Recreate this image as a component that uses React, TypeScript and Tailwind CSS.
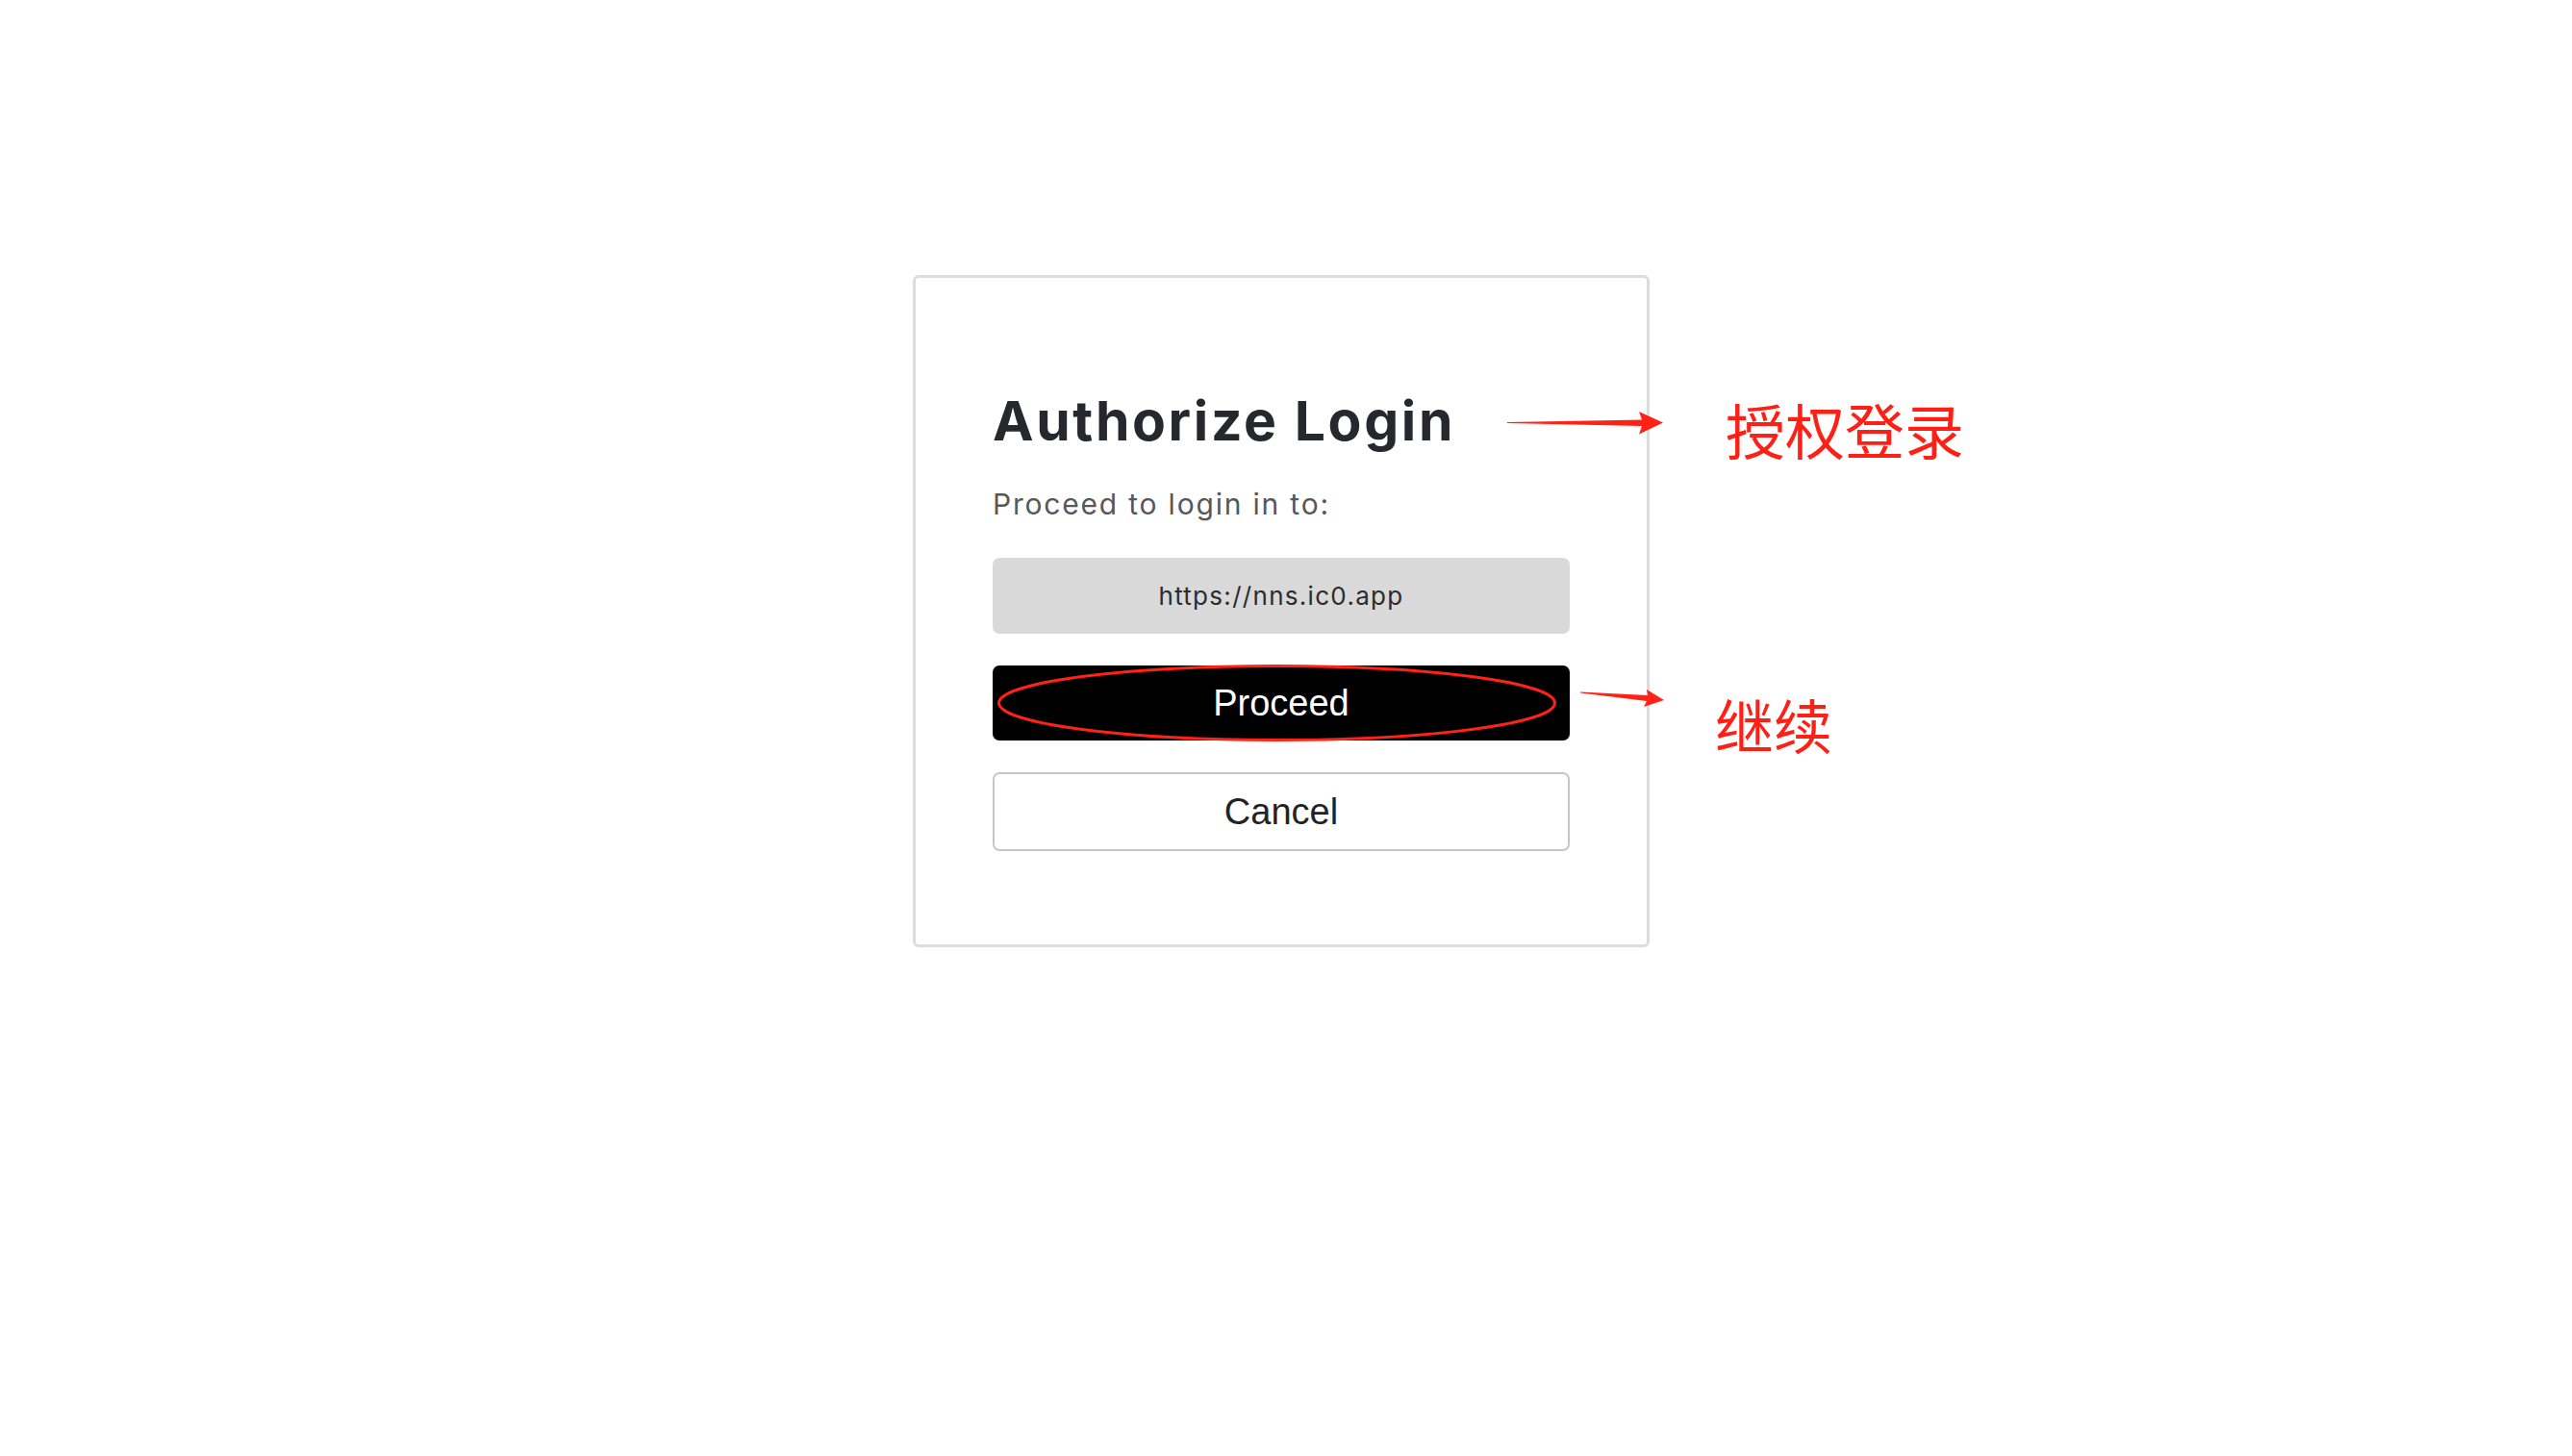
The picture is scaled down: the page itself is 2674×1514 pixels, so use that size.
import React from "react";

const RED = "#ff2215";

function ArrowRight() {
  return (
    <svg className="absolute left-[618px] top-[141px]" width="164" height="26" viewBox="0 0 164 26" aria-hidden="true">
      <polygon points="0,12 140,9.5 137,1 162,12.5 137,24.5 140,16 0,13" fill={RED} />
    </svg>
  );
}

function ArrowSmall() {
  return (
    <svg className="absolute left-[691px] top-[426px]" width="94" height="28" viewBox="0 0 94 28" aria-hidden="true">
      <polygon points="3,7.5 73,11 72,5 90,16 69,23 72,17 3,8.5" fill={RED} />
    </svg>
  );
}

export default function App() {
  return (
    <div className="min-h-screen bg-white pt-[286px] pr-[10px] flex justify-center font-['Inter',sans-serif]">
      <div className="relative">
        <div className="w-[766px] rounded-[6px] border-[3px] border-[#dcdcdc] bg-white px-[80px] pt-[120px] pb-[97px]">
          <h1 className="text-[57px] leading-none font-bold tracking-[0.046em] text-[#27282d]">
            Authorize Login
          </h1>
          <p className="mt-[43px] text-[30px] leading-none tracking-[0.06em] text-[#57585c]">
            Proceed to login in to:
          </p>
          <div className="mt-[41px] flex h-[79px] items-center justify-center rounded-[7px] bg-[#d9d9d9] text-[26px] tracking-[0.05em] text-[#2b2c30]">
            https://nns.ic0.app
          </div>
          <div className="relative mt-[33px]">
            <button className="flex h-[78px] w-full items-center justify-center rounded-[7px] bg-black font-['Liberation_Sans',Arial,sans-serif] text-[38px] text-white">
              Proceed
            </button>
            <svg className="pointer-events-none absolute left-0 top-[-2px]" width="600" height="84" viewBox="0 0 600 84" aria-hidden="true">
              <ellipse cx="295.5" cy="41" rx="289" ry="38.5" fill="none" stroke={RED} strokeWidth="3" />
            </svg>
          </div>
          <button className="mt-[33px] flex h-[82px] w-full items-center justify-center rounded-[7px] border-2 border-[#c6c6c6] bg-white font-['Liberation_Sans',Arial,sans-serif] text-[38px] text-[#222327]">
            Cancel
          </button>
        </div>

        <ArrowRight />
        <span className="absolute left-[845px] top-[129px] whitespace-nowrap font-['Noto_Sans_CJK_SC',sans-serif] text-[62px] leading-none text-[#ff2015]">
          授权登录
        </span>
        <ArrowSmall />
        <span className="absolute left-[834px] top-[436px] whitespace-nowrap font-['Noto_Sans_CJK_SC',sans-serif] text-[61px] leading-none text-[#ff2015]">
          继续
        </span>
      </div>
    </div>
  );
}
